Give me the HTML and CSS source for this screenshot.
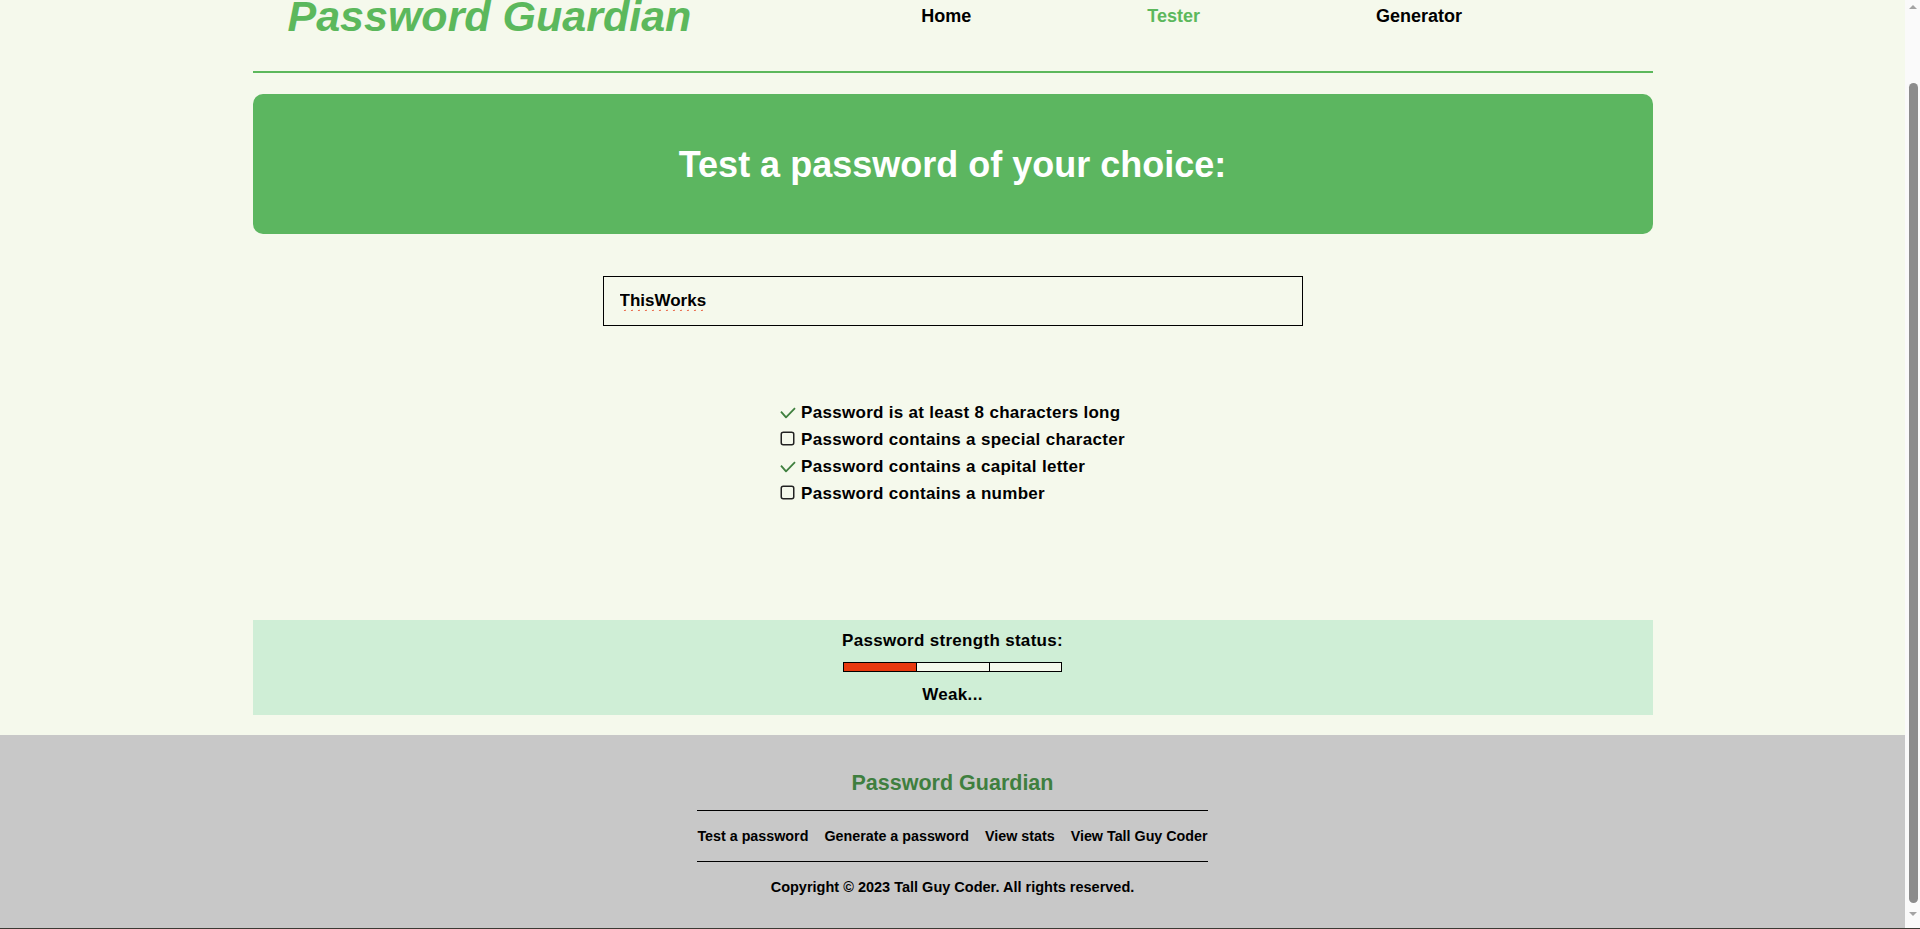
FILE: index.html
```html
<!DOCTYPE html>
<html lang="en">
<head>
<meta charset="utf-8">
<title>Password Guardian - Tester</title>
<link rel="stylesheet" href="styles.css">
</head>
<body>
<header class="site-header">
  <div class="brand">Password Guardian</div>
  <nav class="main-nav">
    <a href="#">Home</a>
    <a href="#" class="active">Tester</a>
    <a href="#">Generator</a>
  </nav>
</header>

<main class="container">
  <section class="hero">
    <h1>Test a password of your choice:</h1>
  </section>

  <div class="tester">
    <input class="pw-input" type="text" value="ThisWorks" spellcheck="true">
  </div>

  <ul class="checklist">
    <li>
      <svg class="ico-check" width="16" height="12" viewBox="0 0 16 12"><polyline points="1,4.6 6,10.4 15,1.2" fill="none" stroke="#3f803f" stroke-width="1.8" stroke-linejoin="round"/></svg>
      <span>Password is at least 8 characters long</span>
    </li>
    <li>
      <svg class="ico-box" width="15" height="15" viewBox="0 0 15 15"><rect x="1.25" y="1.25" width="12.5" height="12.5" rx="2" fill="none" stroke="#222" stroke-width="1.5"/></svg>
      <span>Password contains a special character</span>
    </li>
    <li>
      <svg class="ico-check" width="16" height="12" viewBox="0 0 16 12"><polyline points="1,4.6 6,10.4 15,1.2" fill="none" stroke="#3f803f" stroke-width="1.8" stroke-linejoin="round"/></svg>
      <span>Password contains a capital letter</span>
    </li>
    <li>
      <svg class="ico-box" width="15" height="15" viewBox="0 0 15 15"><rect x="1.25" y="1.25" width="12.5" height="12.5" rx="2" fill="none" stroke="#222" stroke-width="1.5"/></svg>
      <span>Password contains a number</span>
    </li>
  </ul>

  <section class="strength">
    <div class="strength-label">Password strength status:</div>
    <div class="meter">
      <span class="seg filled"></span>
      <span class="seg"></span>
      <span class="seg"></span>
    </div>
    <div class="strength-text">Weak...</div>
  </section>
</main>

<footer class="site-footer">
  <div class="footer-title">Password Guardian</div>
  <nav class="footer-links">
    <a href="#">Test a password</a>
    <a href="#">Generate a password</a>
    <a href="#">View stats</a>
    <a href="#">View Tall Guy Coder</a>
  </nav>
  <div class="copyright">Copyright &copy; 2023 Tall Guy Coder. All rights reserved.</div>
</footer>

<div class="fake-scrollbar" aria-hidden="true">
  <span class="sb-arrow sb-up"></span>
  <span class="sb-thumb"></span>
  <span class="sb-arrow sb-down"></span>
</div>
<script src="script.js"></script>
</body>
</html>
```

FILE: styles.css
```css
html, body {
  margin: 0;
  padding: 0;
}

body {
  background: #f5f9ec;
  color: #000;
  font-family: "Liberation Sans", Arial, sans-serif;
  font-weight: bold;
  padding-right: 15px;
}

a {
  color: #000;
  text-decoration: none;
}

/* Header */
.site-header {
  width: 1400px;
  margin: 0 auto;
  box-sizing: border-box;
  padding: 72px 0 33px 35px;
  border-bottom: 2px solid #5cb85c;
  display: flex;
  align-items: flex-start;
  gap: 230px;
}

.brand {
  font-size: 43px;
  line-height: 43px;
  font-style: italic;
  font-weight: bold;
  color: #5cb85c;
}

.main-nav {
  display: flex;
  gap: 176px;
  margin-top: 10px;
}

.main-nav a {
  font-size: 18px;
  line-height: 22px;
}

.main-nav a.active {
  color: #5cb85c;
}

/* Main */
.container {
  width: 1400px;
  margin: 21px auto 0;
}

.hero {
  height: 140px;
  background: #5cb660;
  border-radius: 10px;
  display: flex;
  align-items: center;
  justify-content: center;
}

.hero h1 {
  margin: 0;
  font-size: 36px;
  line-height: 41px;
  color: #fff;
}

.tester {
  display: flex;
  justify-content: center;
  margin-top: 42px;
}

.pw-input {
  width: 700px;
  height: 50px;
  box-sizing: border-box;
  border: 1px solid #000;
  border-radius: 0;
  background: transparent;
  padding: 0 16px;
  font-family: "Liberation Sans", Arial, sans-serif;
  font-size: 17px;
  font-weight: bold;
  color: #000;
  outline: none;
  text-decoration-line: underline;
  text-decoration-style: wavy;
  text-decoration-color: #e8502e;
  text-decoration-thickness: 1px;
  text-underline-offset: 3px;
}

.checklist {
  list-style: none;
  margin: 73px auto 0;
  padding: 0;
  width: fit-content;
}

.checklist li {
  display: flex;
  align-items: center;
  gap: 5px;
  height: 27px;
  font-size: 17px;
  line-height: 27px;
  letter-spacing: 0.3px;
}

.ico-check {
  margin-top: 0;
}

.ico-box {
  margin: -3px 1px 0 0;
}

.strength {
  margin-top: 113px;
  background: #cfeed6;
  padding: 11px 0 10px;
  display: flex;
  flex-direction: column;
  align-items: center;
}

.strength-label,
.strength-text {
  font-size: 17px;
  line-height: 20px;
  letter-spacing: 0.3px;
}

.meter {
  margin-top: 11px;
  width: 219px;
  height: 10px;
  box-sizing: border-box;
  border: 1px solid #000;
  display: grid;
  grid-template-columns: repeat(3, 1fr);
}

.seg {
  background: #f5f9ec;
}

.seg + .seg {
  border-left: 1px solid #000;
}

.seg.filled {
  background: #e8390e;
}

.strength-text {
  margin-top: 13px;
}

/* Footer */
.site-footer {
  margin-top: 20px;
  background: #c8c8c8;
  padding: 36px 0 31.5px;
  border-bottom: 1px solid #3c3a34;
  display: flex;
  flex-direction: column;
  align-items: center;
}

.footer-title {
  font-size: 21.5px;
  line-height: 25px;
  color: #3f7f3f;
}

.footer-links {
  margin-top: 13.5px;
  display: flex;
  gap: 16px;
  padding: 17px 0 16px;
  border-top: 1px solid #000;
  border-bottom: 1px solid #000;
}

.footer-links a {
  font-size: 14.3px;
  line-height: 17px;
}

.copyright {
  margin-top: 17.5px;
  font-size: 14.5px;
  line-height: 17px;
}

/* Window scrollbar (drawn, since the capture hides the native one) */
.fake-scrollbar {
  position: fixed;
  top: 0;
  right: 0;
  width: 15px;
  height: 100vh;
  box-sizing: border-box;
  background: #fafafa;
  border-bottom: 1px solid #3c3a34;
  display: flex;
  flex-direction: column;
  align-items: center;
}

.sb-arrow {
  width: 0;
  height: 0;
  border-left: 4px solid transparent;
  border-right: 4px solid transparent;
}

.sb-up {
  margin-top: 5px;
  border-bottom: 4px solid #a3a3a3;
}

.sb-thumb {
  width: 9px;
  margin: 74px 0 0 1px;
  height: 820px;
  border-radius: 5px;
  background: #8c8c8c;
}

.sb-down {
  margin-top: 9px;
  border-top: 4px solid #a3a3a3;
}
```

FILE: script.js
```js
window.scrollTo(0, document.documentElement.scrollHeight);
window.addEventListener('load', function () {
  window.scrollTo(0, document.documentElement.scrollHeight);
});
```
